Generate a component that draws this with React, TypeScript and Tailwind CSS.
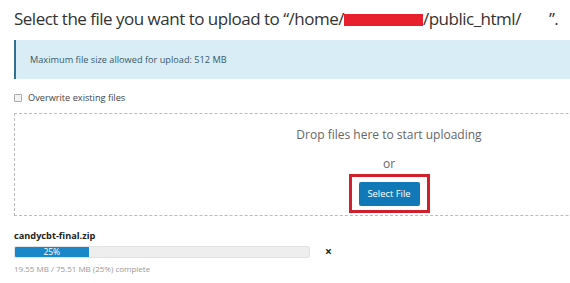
import React from "react";

export default function App() {
  return (
    <div className="w-[570px] h-[283px] overflow-hidden bg-white" style={{ fontFamily: '"Open Sans", sans-serif' }}>
      <div className="w-[800px] pl-[14px]">
        <h1 className="pt-[6px] h-[32px] text-[17px] leading-[26px] tracking-[-0.5px] text-[#333] font-normal whitespace-nowrap flex items-center">
          <span>Select the file you want to upload to “/home/</span>
          <span className="inline-block w-[79px] h-[12px] bg-[#e8202e] mt-[1px]" />
          <span>/public_html/</span>
          <span className="inline-block w-[28px]" />
          <span>”.</span>
        </h1>
        <div className="mt-[8px] w-[760px] h-[39px] bg-[#d9edf7] border-l-[2px] border-[#31708f] flex items-center pl-[14px] text-[9.2px] text-[#3a5866]">
          Maximum file size allowed for upload: 512 MB
        </div>
        <label className="mt-[12px] h-[14px] flex items-center gap-[6px] text-[9.2px] text-[#444]">
          <span className="inline-block w-[8px] h-[8px] border border-[#aaa] rounded-[1px] bg-[#f3f3f3]" />
          Overwrite existing files
        </label>
        <div className="mt-[8px] w-[750px] h-[103px] border border-dashed border-[#bbb] flex flex-col items-center">
          <div className="mt-[13px] text-[12px] leading-[16px] text-[#666]">Drop files here to start uploading</div>
          <div className="mt-[13px] text-[12px] leading-[16px] text-[#666]">or</div>
          <div className="mt-[2px] border-[3px] border-[#d0202e] px-[7px] pt-[5px] pb-[4px] flex">
            <button className="w-[61px] h-[24px] bg-[#1279b8] text-white text-[9.4px] rounded-[2px]">Select File</button>
          </div>
        </div>
        <div className="mt-[14px] text-[9.2px] leading-[12px] font-bold text-[#222]">candycbt-final.zip</div>
        <div className="mt-[4px] flex items-center">
          <div className="w-[296px] h-[12px] bg-[#eee] rounded-[2px] border border-[#e2e2e2] overflow-hidden">
            <div className="h-full bg-[#1a87c8] text-white text-[8.5px] leading-[10px] text-center" style={{ width: "25%" }}>25%</div>
          </div>
          <span className="ml-[15px] text-[12px] font-bold text-[#222] leading-none">×</span>
        </div>
        <div className="mt-[5px] text-[8px] leading-[11px] text-[#999]">19.55 MB / 75.51 MB (25%) complete</div>
      </div>
    </div>
  );
}
